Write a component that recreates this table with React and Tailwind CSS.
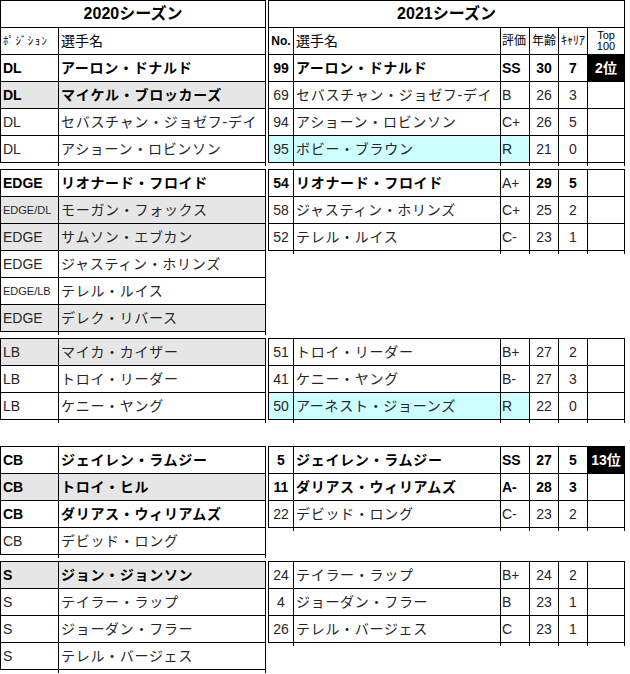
import React from 'react';

const GRAY = 'bg-[#e7e6e6]';
const CYAN = 'bg-[#ccffff]';

const dl = [
  { pos: 'DL', name: 'アーロン・ドナルド', bold: true },
  { pos: 'DL', name: 'マイケル・ブロッカーズ', bold: true, gray: true },
  { pos: 'DL', name: 'セバスチャン・ジョゼフ-デイ' },
  { pos: 'DL', name: 'アショーン・ロビンソン' },
];

const edge = [
  { pos: 'EDGE', name: 'リオナード・フロイド', bold: true },
  { pos: 'EDGE/DL', name: 'モーガン・フォックス', gray: true, small: true },
  { pos: 'EDGE', name: 'サムソン・エブカン', gray: true },
  { pos: 'EDGE', name: 'ジャスティン・ホリンズ' },
  { pos: 'EDGE/LB', name: 'テレル・ルイス', small: true },
  { pos: 'EDGE', name: 'デレク・リバース', gray: true },
];

const lb = [
  { pos: 'LB', name: 'マイカ・カイザー', gray: true },
  { pos: 'LB', name: 'トロイ・リーダー' },
  { pos: 'LB', name: 'ケニー・ヤング' },
];

const cb = [
  { pos: 'CB', name: 'ジェイレン・ラムジー', bold: true },
  { pos: 'CB', name: 'トロイ・ヒル', bold: true, gray: true },
  { pos: 'CB', name: 'ダリアス・ウィリアムズ', bold: true },
  { pos: 'CB', name: 'デビッド・ロング' },
];

const safety = [
  { pos: 'S', name: 'ジョン・ジョンソン', bold: true, gray: true },
  { pos: 'S', name: 'テイラー・ラップ' },
  { pos: 'S', name: 'ジョーダン・フラー' },
  { pos: 'S', name: 'テレル・バージェス' },
];

// b = bold flags for [no, name, grade, age, career]
const r21dl = [
  { no: '99', name: 'アーロン・ドナルド', grade: 'SS', age: '30', car: '7', top: '2位', b: [1, 1, 1, 1, 1] },
  { no: '69', name: 'セバスチャン・ジョゼフ-デイ', grade: 'B', age: '26', car: '3' },
  { no: '94', name: 'アショーン・ロビンソン', grade: 'C+', age: '26', car: '5' },
  { no: '95', name: 'ボビー・ブラウン', grade: 'R', age: '21', car: '0', cyan: true },
];

const r21edge = [
  { no: '54', name: 'リオナード・フロイド', grade: 'A+', age: '29', car: '5', b: [1, 1, 0, 1, 1] },
  { no: '58', name: 'ジャスティン・ホリンズ', grade: 'C+', age: '25', car: '2' },
  { no: '52', name: 'テレル・ルイス', grade: 'C-', age: '23', car: '1' },
];

const r21lb = [
  { no: '51', name: 'トロイ・リーダー', grade: 'B+', age: '27', car: '2' },
  { no: '41', name: 'ケニー・ヤング', grade: 'B-', age: '27', car: '3' },
  { no: '50', name: 'アーネスト・ジョーンズ', grade: 'R', age: '22', car: '0', cyan: true },
];

const r21cb = [
  { no: '5', name: 'ジェイレン・ラムジー', grade: 'SS', age: '27', car: '5', top: '13位', b: [1, 1, 1, 1, 1] },
  { no: '11', name: 'ダリアス・ウィリアムズ', grade: 'A-', age: '28', car: '3', b: [1, 1, 1, 1, 1] },
  { no: '22', name: 'デビッド・ロング', grade: 'C-', age: '23', car: '2' },
];

const r21s = [
  { no: '24', name: 'テイラー・ラップ', grade: 'B+', age: '24', car: '2' },
  { no: '4', name: 'ジョーダン・フラー', grade: 'B', age: '23', car: '1' },
  { no: '26', name: 'テレル・バージェス', grade: 'C', age: '23', car: '1' },
];

// little grid ticks that poke out under the last row, like the excel capture
const TICK =
  "relative after:content-[''] after:absolute after:-right-px after:top-full after:h-[4px] after:w-px after:bg-black";

const Row = ({ children, className = '' }) => (
  <div className={`flex h-[27px] border-b border-black ${className}`}>{children}</div>
);

const Cell = ({ w, className = '', tick, children }) => (
  <div className={`${w} shrink-0 border-r border-black flex items-center ${tick ? TICK : ''} ${className}`}>
    {children}
  </div>
);

const weight = (on) => (on ? 'font-bold text-black' : 'font-normal text-[#262626]');

const LeftRow = ({ p, last }) => (
  <Row className={p.gray ? GRAY : ''}>
    <Cell w="w-[58px]" tick={last} className={`pl-[2px] ${p.small ? 'text-[11px]' : 'text-[14px]'} ${weight(p.bold)}`}>
      {p.pos}
    </Cell>
    <Cell w="w-[207px]" tick={last} className={`pl-[2px] text-[14px] tracking-[0.7px] whitespace-nowrap ${weight(p.bold)}`}>
      {p.name}
    </Cell>
  </Row>
);

const RightRow = ({ r, last }) => {
  const b = r.b || [0, 0, 0, 0, 0];
  const c = r.cyan ? CYAN : '';
  return (
    <Row>
      <Cell w="w-[25px]" tick={last} className={`justify-center text-[14px] ${c} ${weight(b[0])}`}>{r.no}</Cell>
      <Cell w="w-[207px]" tick={last} className={`pl-[2px] text-[14px] tracking-[0.7px] whitespace-nowrap ${c} ${weight(b[1])}`}>
        {r.name}
      </Cell>
      <Cell w="w-[29px]" tick={last} className={`pl-[1px] text-[14px] ${c} ${weight(b[2])}`}>{r.grade}</Cell>
      <Cell w="w-[29px]" tick={last} className={`justify-center text-[14px] ${weight(b[3])}`}>{r.age}</Cell>
      <Cell w="w-[29px]" tick={last} className={`justify-center text-[14px] ${weight(b[4])}`}>{r.car}</Cell>
      <Cell
        w="w-[37px]"
        tick={last}
        className={`justify-center text-[14px] font-bold ${r.top ? 'bg-black text-white' : ''}`}
      >
        {r.top}
      </Cell>
    </Row>
  );
};

const Left = ({ rows, head }) => (
  <div className="w-[266px] shrink-0 border-l border-t border-black">
    {head && (
      <>
        <Row>
          <Cell w="w-[265px]" className="justify-center text-[16px] font-bold text-black">2020シーズン</Cell>
        </Row>
        <Row>
          <Cell w="w-[58px]" className="pl-[2px] text-[11px] tracking-[1.4px] text-black">ﾎﾟｼﾞｼｮﾝ</Cell>
          <Cell w="w-[207px]" className="pl-[2px] text-[14px] text-black">選手名</Cell>
        </Row>
      </>
    )}
    {rows.map((p, i) => (
      <LeftRow key={i} p={p} last={i === rows.length - 1} />
    ))}
  </div>
);

const Right = ({ rows, head }) => (
  <div className="w-[357px] shrink-0 border-l border-t border-black">
    {head && (
      <>
        <Row>
          <Cell w="w-[356px]" className="justify-center text-[16px] font-bold text-black">2021シーズン</Cell>
        </Row>
        <Row>
          <Cell w="w-[25px]" className="justify-center text-[12px] font-bold text-black">No.</Cell>
          <Cell w="w-[207px]" className="pl-[2px] text-[14px] text-black">選手名</Cell>
          <Cell w="w-[29px]" className="pl-[1px] text-[12px] text-black">評価</Cell>
          <Cell w="w-[29px]" className="justify-center text-[12px] text-black">年齢</Cell>
          <Cell w="w-[29px]" className="justify-center text-[12px] text-black">ｷｬﾘｱ</Cell>
          <Cell w="w-[37px]" className="flex-col justify-center text-[11px] leading-[11px] text-black">
            <span>Top</span>
            <span>100</span>
          </Cell>
        </Row>
      </>
    )}
    {rows.map((r, i) => (
      <RightRow key={i} r={r} last={i === rows.length - 1} />
    ))}
  </div>
);

const Band = ({ left, right, head, className = '' }) => (
  <div className={`flex items-start gap-[2px] ${className}`}>
    <Left rows={left} head={head} />
    <Right rows={right} head={head} />
  </div>
);

export default function App() {
  return (
    <div className="w-[630px] h-[674px] bg-white overflow-hidden font-['Liberation_Sans','Noto_Sans_CJK_JP',sans-serif]">
      <Band head left={dl} right={r21dl} />
      <Band left={edge} right={r21edge} className="mt-[6px]" />
      <Band left={lb} right={r21lb} className="mt-[6px]" />
      <Band left={cb} right={r21cb} className="mt-[26px]" />
      <Band left={safety} right={r21s} className="mt-[6px]" />
    </div>
  );
}
